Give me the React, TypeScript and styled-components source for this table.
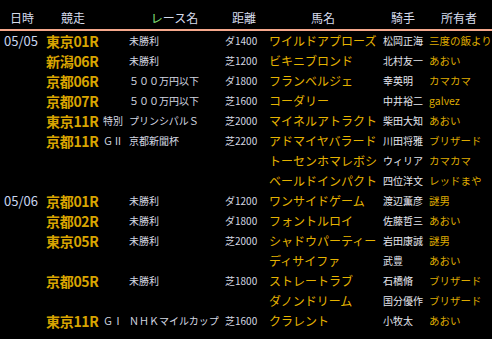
import * as React from 'react';
import styled, { createGlobalStyle } from 'styled-components';

interface Entry {
  date?: string
  race?: string
  grade?: string
  name?: string
  dist?: string
  horse: string
  jockey: string
  owner: string
}

const GlobalStyle = createGlobalStyle`
  html, body {
    margin: 0;
    padding: 0;
    background: #000;
  }
  body {
    font-family: "Noto Sans CJK JP", "DejaVu Sans", sans-serif;
    color: #d8dce8;
  }
`;

const Table = styled.div`
  width: 492px;
  height: 339px;
  background: #000;
  overflow: hidden;
`;

const Row = styled.div`
  display: grid;
  grid-template-columns: 44px 58px 25px 95px 44px 114px 46px 66px;
  height: 20px;
  align-items: center;
`;

const HeadRow = styled(Row)`
  height: 24px;
  padding-top: 5px;
  border-bottom: 2px solid #f6a88c;
`;

const Head = styled.div`
  font-size: 12px;
  text-align: center;
  color: #d6dcec;
  white-space: nowrap;
`;

const Green = styled.span`
  color: #86e27a;
`;

const Body = styled.div`
  padding-top: 0px;
`;

const Cell = styled.div<{ $pad?: number }>`
  padding-left: ${(p) => p.$pad ?? 3}px;
  white-space: nowrap;
  overflow: hidden;
  line-height: 20px;
`;

const DateCell = styled(Cell)`
  font-size: 13px;
  color: #c8d6f0;
`;

const RaceCell = styled(Cell)`
  font-size: 14px;
  font-weight: bold;
  color: #d8a400;
  letter-spacing: -0.3px;
`;

const SmallCell = styled(Cell)`
  font-size: 10px;
  color: #d4d8e2;
`;

const HorseCell = styled(Cell)`
  font-size: 12px;
  color: #e6b400;
`;

const JockeyCell = styled(Cell)`
  font-size: 10px;
  color: #e4e6ee;
`;

const OwnerCell = styled(Cell)`
  font-size: 10.5px;
  color: #deaa00;
`;

const entries: Entry[] = [
  { date: '05/05', race: '東京01R', name: '未勝利', dist: 'ダ1400', horse: 'ワイルドアプローズ', jockey: '松岡正海', owner: '三度の飯より' },
  { race: '新潟06R', name: '未勝利', dist: '芝1200', horse: 'ビキニブロンド', jockey: '北村友一', owner: 'あおい' },
  { race: '京都06R', name: '５００万円以下', dist: 'ダ1800', horse: 'フランベルジェ', jockey: '幸英明', owner: 'カマカマ' },
  { race: '京都07R', name: '５００万円以下', dist: '芝1600', horse: 'コーダリー', jockey: '中井裕二', owner: 'galvez' },
  { race: '東京11R', grade: '特別', name: 'プリンシパルＳ', dist: '芝2000', horse: 'マイネルアトラクト', jockey: '柴田大知', owner: 'あおい' },
  { race: '京都11R', grade: 'ＧⅡ', name: '京都新聞杯', dist: '芝2200', horse: 'アドマイヤバラード', jockey: '川田将雅', owner: 'ブリザード' },
  { horse: 'トーセンホマレボシ', jockey: 'ウィリア', owner: 'カマカマ' },
  { horse: 'ベールドインパクト', jockey: '四位洋文', owner: 'レッドまや' },
  { date: '05/06', race: '京都01R', name: '未勝利', dist: 'ダ1200', horse: 'ワンサイドゲーム', jockey: '渡辺薫彦', owner: '謎男' },
  { race: '京都02R', name: '未勝利', dist: 'ダ1800', horse: 'フォントルロイ', jockey: '佐藤哲三', owner: 'あおい' },
  { race: '東京05R', name: '未勝利', dist: '芝2000', horse: 'シャドウパーティー', jockey: '岩田康誠', owner: '謎男' },
  { horse: 'ディサイファ', jockey: '武豊', owner: 'あおい' },
  { race: '京都05R', name: '未勝利', dist: '芝1800', horse: 'ストレートラブ', jockey: '石橋脩', owner: 'ブリザード' },
  { horse: 'ダノンドリーム', jockey: '国分優作', owner: 'ブリザード' },
  { race: '東京11R', grade: 'ＧⅠ', name: 'ＮＨＫマイルカップ', dist: '芝1600', horse: 'クラレント', jockey: '小牧太', owner: 'あおい' },
];

export default function App() {
  return (
    <Table>
      <GlobalStyle />
      <HeadRow>
        <Head>日時</Head>
        <Head>競走</Head>
        <Head />
        <Head><Green>レ</Green>ース名</Head>
        <Head>距離</Head>
        <Head>馬名</Head>
        <Head>騎手</Head>
        <Head>所有者</Head>
      </HeadRow>
      <Body>
        {entries.map((e, i) => (
          <Row key={i}>
            <DateCell $pad={4}>{e.date}</DateCell>
            <RaceCell $pad={2}>{e.race}</RaceCell>
            <SmallCell $pad={1}>{e.grade}</SmallCell>
            <SmallCell $pad={2}>{e.name}</SmallCell>
            <SmallCell $pad={3}>{e.dist}</SmallCell>
            <HorseCell $pad={3}>{e.horse}</HorseCell>
            <JockeyCell $pad={3}>{e.jockey}</JockeyCell>
            <OwnerCell $pad={3}>{e.owner}</OwnerCell>
          </Row>
        ))}
      </Body>
    </Table>
  );
}
